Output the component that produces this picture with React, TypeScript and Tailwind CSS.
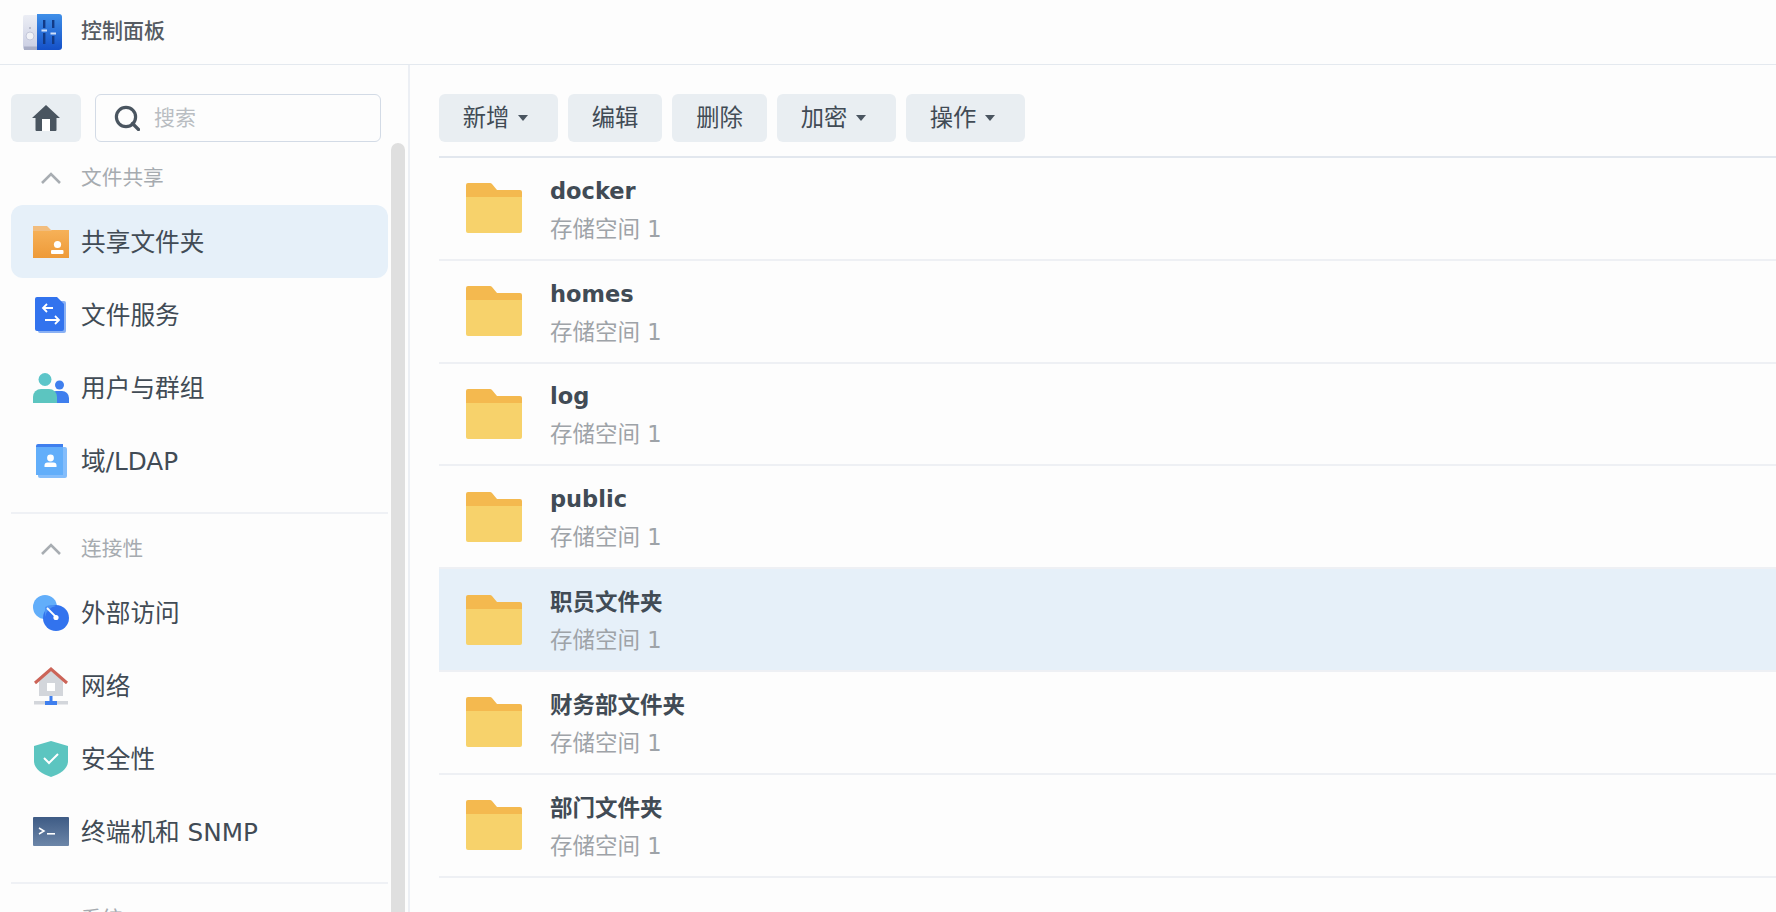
import React from "react";

const FONT = "font-['DejaVu_Sans','Noto_Sans_CJK_SC',sans-serif]";

const Logo = () => (
  <svg width="39" height="36" viewBox="0 0 39 36">
    <defs>
      <linearGradient id="logoBlue" x1="0" y1="0" x2="0" y2="1">
        <stop offset="0" stopColor="#3f8fe8" />
        <stop offset="1" stopColor="#1450c8" />
      </linearGradient>
      <linearGradient id="logoGrey" x1="0" y1="0" x2="0" y2="1">
        <stop offset="0" stopColor="#eceef5" />
        <stop offset="1" stopColor="#c9cde2" />
      </linearGradient>
    </defs>
    <path d="M0 3a2 2 0 0 1 2-2h14v35H3a3 3 0 0 1-3-3z" fill="url(#logoGrey)" />
    <rect x="1" y="32.5" width="15" height="3.5" fill="#a9aec6" />
    <circle cx="7" cy="22" r="4" fill="#f1f2f7" stroke="#c4c8da" />
    <rect x="6" y="13" width="2" height="2" fill="#b8bccd" />
    <path d="M14 0h22a3 3 0 0 1 3 3v30a3 3 0 0 1-3 3H14z" fill="url(#logoBlue)" />
    <g fill="#123a86">
      <rect x="20" y="6" width="2.4" height="8" />
      <rect x="20" y="19" width="2.4" height="11" />
      <rect x="29" y="6" width="2.4" height="8" />
      <rect x="29" y="22" width="2.4" height="8" />
    </g>
    <rect x="18.5" y="15.5" width="5.5" height="2" fill="#cfe0fa" />
    <rect x="27.5" y="18.5" width="5.5" height="2" fill="#cfe0fa" />
  </svg>
);

const HomeGlyph = () => (
  <svg width="28" height="26" viewBox="0 0 28 26">
    <path d="M14 0 28 13h-3.5v12a1 1 0 0 1-1 1h-19a1 1 0 0 1-1-1V13H0z" fill="#4a5560" />
    <rect x="10" y="14" width="8" height="12" fill="#fff" />
  </svg>
);

const SearchGlyph = () => (
  <svg width="26" height="26" viewBox="0 0 26 26" fill="none" stroke="#4a5560" strokeWidth="3.2">
    <circle cx="12" cy="12" r="9.6" />
    <path d="m18.5 18.5 6 6" strokeLinecap="round" />
  </svg>
);

const Chevron = () => (
  <svg width="20" height="12" viewBox="0 0 20 12" fill="none" stroke="#a8adb2" strokeWidth="2.6">
    <path d="m1 11 9-9 9 9" />
  </svg>
);

const SharedIcon = () => (
  <svg width="36" height="32" viewBox="0 0 36 32">
    <defs>
      <linearGradient id="shared" x1="0" y1="0" x2="0" y2="1">
        <stop offset="0" stopColor="#f6b158" />
        <stop offset="1" stopColor="#ee9a38" />
      </linearGradient>
    </defs>
    <rect x="0" y="4" width="36" height="28" fill="url(#shared)" />
    <path d="M0 0h14l4 4H0z" fill="#f2bd7e" />
    <path d="M0 4h18l1 1H0z" fill="#f2bd7e" />
    <circle cx="24.5" cy="18.5" r="3.6" fill="#fff" />
    <rect x="18" y="24" width="12.5" height="4" rx="1" fill="#fff" />
  </svg>
);

const FileServiceIcon = () => (
  <svg width="32" height="36" viewBox="0 0 32 36">
    <rect x="3" y="4" width="28" height="32" rx="2" fill="#8ab1f4" />
    <path d="M0 2a2 2 0 0 1 2-2h20l7 7v25a2 2 0 0 1-2 2H2a2 2 0 0 1-2-2z" fill="#3273ee" />
    <g fill="none" stroke="#fff" strokeWidth="1.8">
      <path d="M18 11H8M12 7l-4 4 4 4" />
      <path d="M10 23h14M20 19l4 4-4 4" />
    </g>
  </svg>
);

const UsersIcon = () => (
  <svg width="36" height="30" viewBox="0 0 36 30">
    <circle cx="26.5" cy="12" r="4.5" fill="#3f7fee" />
    <path d="M16 30v-5a7 7 0 0 1 7-7h6a7 7 0 0 1 7 7v5z" fill="#3f7fee" />
    <circle cx="12" cy="6.5" r="6.5" fill="#5cc5c9" />
    <path d="M0 30v-6a8 8 0 0 1 8-8h8a8 8 0 0 1 8 8v6z" fill="#5cc5c0" />
  </svg>
);

const LdapIcon = () => (
  <svg width="31" height="34" viewBox="0 0 31 34">
    <rect x="2" y="3" width="29" height="31" rx="2" fill="#84bdfb" />
    <path d="M0 2a2 2 0 0 1 2-2h25v4H0z" fill="#3f7fee" />
    <rect x="0" y="3" width="27" height="28" fill="#62aefa" />
    <circle cx="14.5" cy="14" r="3.4" fill="#fff" />
    <path d="M8.5 23v-1.5a3 3 0 0 1 3-3h6a3 3 0 0 1 3 3V23z" fill="#fff" />
  </svg>
);

const ExternalIcon = () => (
  <svg width="36" height="36" viewBox="0 0 36 36">
    <circle cx="12" cy="12" r="12" fill="#62aefa" />
    <circle cx="23" cy="23" r="13" fill="#3273ee" />
    <path d="M12 12a12 12 0 0 1 11-1 13 13 0 0 0-11 11z" fill="#4c93f4" />
    <path d="m14 13 9 9" stroke="#fff" strokeWidth="1.8" />
    <circle cx="23" cy="22.5" r="2.6" fill="#fff" />
  </svg>
);

const NetworkIcon = () => (
  <svg width="34" height="38" viewBox="0 0 34 38">
    <path d="M5 14 17 3l12 11v15H5z" fill="#d3d6db" />
    <path d="M1 16 17 2l16 14" fill="none" stroke="#cc6458" strokeWidth="3" />
    <rect x="13" y="16" width="8" height="8" fill="#fff" />
    <rect x="0" y="34" width="34" height="3.5" fill="#d3d6db" />
    <rect x="15.5" y="29" width="3" height="6" fill="#3f7fee" />
    <rect x="11" y="34" width="12" height="4" fill="#3f7fee" />
  </svg>
);

const ShieldIcon = () => (
  <svg width="34" height="36" viewBox="0 0 34 36">
    <path d="M17 0 34 5v15c0 8-8 13-17 16C8 33 0 28 0 20V5z" fill="#5cc5c0" />
    <path d="m10 17 5 5 9-9" fill="none" stroke="#fff" strokeWidth="2" />
  </svg>
);

const TerminalIcon = () => (
  <svg width="36" height="29" viewBox="0 0 36 29">
    <defs>
      <linearGradient id="term" x1="0" y1="0" x2="0" y2="1">
        <stop offset="0" stopColor="#3e5b85" />
        <stop offset="1" stopColor="#6c86a8" />
      </linearGradient>
    </defs>
    <rect width="36" height="29" rx="1" fill="url(#term)" />
    <path d="m6 11 5 3-5 3" fill="none" stroke="#fff" strokeWidth="1.5" />
    <rect x="14" y="16" width="8" height="1.6" fill="#fff" />
  </svg>
);

const FolderIcon = () => (
  <svg width="56" height="50" viewBox="0 0 56 50" className="shrink-0">
    <path d="M0 2a2 2 0 0 1 2-2h22a3 3 0 0 1 2 1l5 6h23a2 2 0 0 1 2 2v6H0z" fill="#f4b94f" />
    <path d="M0 14h56v34a2 2 0 0 1-2 2H2a2 2 0 0 1-2-2z" fill="#f7d26b" />
  </svg>
);

const Caret = () => (
  <svg width="10" height="6" viewBox="0 0 10 6" className="ml-[9px]">
    <path d="M0 0h10L5 6z" fill="#4a5560" />
  </svg>
);

const NavItem = ({ icon, label, active }: { icon: React.ReactNode; label: string; active?: boolean }) => (
  <div className={`flex items-center h-[73px] rounded-xl pl-[22px] ${active ? "bg-[#e6f0f9]" : ""}`}>
    <div className="w-[36px] flex justify-center shrink-0">{icon}</div>
    <span className="ml-[12px] pt-[3px] text-[24.7px] leading-none text-[#414b55]">{label}</span>
  </div>
);

const SectionHead = ({ label }: { label: string }) => (
  <div className="flex items-center h-[54px] mt-[8px] pl-[30px]">
    <Chevron />
    <span className="ml-[20px] pt-[1px] text-[20.7px] leading-none text-[#a6abb0]">{label}</span>
  </div>
);

const ToolButton = ({ label, caret, w }: { label: string; caret?: boolean; w: string }) => (
  <button
    className={`flex items-center justify-center h-[48px] rounded-md bg-[#e9eef2] text-[23.3px] leading-none text-[#414b55] ${caret ? "pr-[6px]" : ""} ${w}`}
  >
    {label}
    {caret && <Caret />}
  </button>
);

const folders = ["docker", "homes", "log", "public", "职员文件夹", "财务部文件夹", "部门文件夹"];

export default function App() {
  return (
    <div className={`h-[912px] w-[1776px] overflow-hidden bg-[#fdfdfd] flex flex-col ${FONT}`}>
      {/* Title bar */}
      <header className="h-[65px] shrink-0 flex items-center pl-[23px] border-b border-[#e4e9ef]">
        <Logo />
        <span className="ml-[19px] text-[21px] font-medium text-[#555b62]">控制面板</span>
      </header>

      <div className="flex flex-1 min-h-0">
        {/* Sidebar */}
        <aside className="relative w-[410px] shrink-0 border-r-2 border-[#eceff4] pl-[11px] pt-[29px] overflow-hidden">
          <div className="flex gap-[14px]">
            <div className="w-[70px] h-[48px] rounded-md bg-[#e9eef2] flex items-center justify-center">
              <HomeGlyph />
            </div>
            <div className="w-[286px] h-[48px] rounded-md border border-[#d3dbe6] flex items-center pl-[18px]">
              <SearchGlyph />
              <span className="ml-[14px] text-[21px] leading-none text-[#b9bdc2]">搜索</span>
            </div>
          </div>

          <div className="absolute left-[391px] top-[78px] bottom-0 w-[14px] rounded-t-lg bg-[#dfdfdf]" />

          <nav className="w-[377px] pt-[1px]">
            <SectionHead label="文件共享" />
            <NavItem active icon={<SharedIcon />} label="共享文件夹" />
            <NavItem icon={<FileServiceIcon />} label="文件服务" />
            <NavItem icon={<UsersIcon />} label="用户与群组" />
            <NavItem icon={<LdapIcon />} label="域/LDAP" />
            <div className="mt-[15px] border-t-2 border-[#eff1f5]" />
            <SectionHead label="连接性" />
            <NavItem icon={<ExternalIcon />} label="外部访问" />
            <NavItem icon={<NetworkIcon />} label="网络" />
            <NavItem icon={<ShieldIcon />} label="安全性" />
            <NavItem icon={<TerminalIcon />} label="终端机和 SNMP" />
            <div className="mt-[14px] border-t-2 border-[#eff1f5]" />
            <SectionHead label="系统" />
          </nav>
        </aside>

        {/* Main */}
        <main className="flex-1 min-w-0 pl-[29px]">
          <div className="flex gap-[10px] pt-[29px] pb-[14px] border-b-2 border-[#e2e7ee]">
            <ToolButton label="新增" caret w="w-[119px]" />
            <ToolButton label="编辑" w="w-[94px]" />
            <ToolButton label="删除" w="w-[95px]" />
            <ToolButton label="加密" caret w="w-[119px]" />
            <ToolButton label="操作" caret w="w-[119px]" />
          </div>
          {folders.map((name) => (
            <div
              key={name}
              className={`flex items-center h-[102.8px] pl-[27px] border-b-2 border-[#eef0f4] ${name === "职员文件夹" ? "bg-[#e6f0f9]" : ""}`}
            >
              <FolderIcon />
              <div className="ml-[28px] pt-[3px]">
                <div className="text-[22.5px] leading-[30px] font-bold text-[#414b55]">{name}</div>
                <div className="mt-[8px] text-[22.5px] leading-[30px] text-[#9ea3a8]">存储空间 1</div>
              </div>
            </div>
          ))}
        </main>
      </div>
    </div>
  );
}
